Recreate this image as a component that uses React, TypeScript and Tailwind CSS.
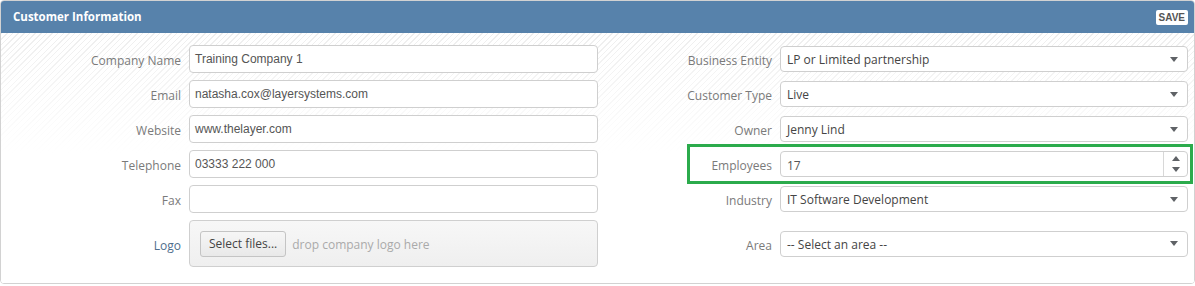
import React from 'react';

const labelCls = "font-['Open_Sans',sans-serif] text-[12px] text-[#7a7a7a] text-right shrink-0 pt-[4px]";

const Arrow = ({ up = false }: { up?: boolean }) => (
  <svg width="8" height="5" viewBox="0 0 8 5" className="block">
    <polygon points={up ? '0,5 8,5 4,0' : '0,0 8,0 4,5'} fill="#5f6266" />
  </svg>
);

const TextInput = ({ value }: { value?: string }) => (
  <div className="w-[409px] h-[28px] bg-white border border-[#cfcfcf] rounded-[4px] flex items-center px-[5px] font-['Liberation_Sans',Arial,sans-serif] text-[12px] text-[#555]">
    {value}
  </div>
);

const Select = ({ value }: { value: string }) => (
  <div className="w-[408px] h-[26px] bg-white border border-[#cfcfcf] rounded-[4px] flex items-center pl-[6px] pr-[9px] font-['Open_Sans',sans-serif] text-[12px] text-[#444]">
    <span className="flex-1 pt-[2px]">{value}</span>
    <Arrow />
  </div>
);

const NumberInput = ({ value }: { value: string }) => (
  <div className="w-[408px] h-[26px] bg-white border border-[#cfcfcf] rounded-[4px] flex items-stretch font-['Open_Sans',sans-serif] text-[12px] text-[#555]">
    <span className="flex-1 flex items-center pl-[6px] pt-[3px]">{value}</span>
    <div className="w-[24px] border-l border-[#d8d8d8] flex flex-col items-center justify-center gap-[6px]">
      <Arrow up />
      <Arrow />
    </div>
  </div>
);

const LeftField = ({ label, children, labelColor }: { label: string; children: React.ReactNode; labelColor?: string }) => (
  <div className="flex items-center w-[597px]">
    <div className={`${labelCls} w-[180px] ${labelColor ?? ''}`}>{label}</div>
    <div className="ml-[8px]">{children}</div>
  </div>
);

const RightField = ({ label, children, highlight }: { label: string; children: React.ReactNode; highlight?: boolean }) => (
  <div className="relative flex items-center h-full">
    <div className={`${labelCls} w-[174px]`}>{label}</div>
    <div className="ml-[8px]">{children}</div>
    {highlight && (
      <div className="absolute top-[-6px] bottom-[-6px] left-[89px] right-[-5px] border-[3px] border-[#2bab4c]" />
    )}
  </div>
);

export default function App() {
  const rows: { left: React.ReactNode; right: React.ReactNode; tall?: boolean }[] = [
    {
      left: <LeftField label="Company Name"><TextInput value="Training Company 1" /></LeftField>,
      right: <RightField label="Business Entity"><Select value="LP or Limited partnership" /></RightField>,
    },
    {
      left: <LeftField label="Email"><TextInput value="natasha.cox@layersystems.com" /></LeftField>,
      right: <RightField label="Customer Type"><Select value="Live" /></RightField>,
    },
    {
      left: <LeftField label="Website"><TextInput value="www.thelayer.com" /></LeftField>,
      right: <RightField label="Owner"><Select value="Jenny Lind" /></RightField>,
    },
    {
      left: <LeftField label="Telephone"><TextInput value="03333 222 000" /></LeftField>,
      right: <RightField label="Employees" highlight><NumberInput value="17" /></RightField>,
    },
    {
      left: <LeftField label="Fax"><TextInput /></LeftField>,
      right: <RightField label="Industry"><Select value="IT Software Development" /></RightField>,
    },
    {
      tall: true,
      left: (
        <LeftField label="Logo" labelColor="!text-[#4f6e8c]">
          <div className="w-[409px] h-[47px] border border-[#cfcfcf] rounded-[4px] bg-[linear-gradient(to_bottom,#f7f7f7,#efefef)] flex items-center px-[10px] gap-[6px] font-['Open_Sans',sans-serif] text-[12px]">
            <div className="h-[26px] px-[8px] flex items-center border border-[#c4c4c4] rounded-[3px] bg-[linear-gradient(to_bottom,#f6f6f6,#e9e9e9)] text-[#444]">
              Select files...
            </div>
            <span className="text-[#aaa] pt-[2px]">drop company logo here</span>
          </div>
        </LeftField>
      ),
      right: <RightField label="Area"><Select value="-- Select an area --" /></RightField>,
    },
  ];

  return (
    <div className="w-[1195px] h-[286px] bg-white">
      <div className="w-[1195px] h-[284px] border border-[#d2d2d2] rounded-[4px] overflow-hidden flex flex-col">
        <div className="h-[32px] bg-[#5782ab] flex items-center justify-between pl-[12px] pr-[6px] shrink-0">
          <span className="font-['Open_Sans',sans-serif] font-bold text-[11.5px] text-white">Customer Information</span>
          <span className="h-[15px] px-[3px] bg-white rounded-[2px] flex items-center font-['Liberation_Sans',Arial,sans-serif] font-bold text-[10px] text-[#555]">
            SAVE
          </span>
        </div>
        <div className="flex-1 pt-[12px] flex flex-col gap-[7px] bg-[linear-gradient(to_bottom,rgba(255,255,255,0)_0px,#fff_120px),repeating-linear-gradient(135deg,#eeeeee_0px,#eeeeee_1px,#ffffff_1px,#ffffff_4px)]">
          {rows.map((r, i) => (
            <div key={i} className={`flex items-center ${r.tall ? 'h-[47px]' : 'h-[28px]'}`}>
              {r.left}
              {r.right}
            </div>
          ))}
        </div>
      </div>
    </div>
  );
}
